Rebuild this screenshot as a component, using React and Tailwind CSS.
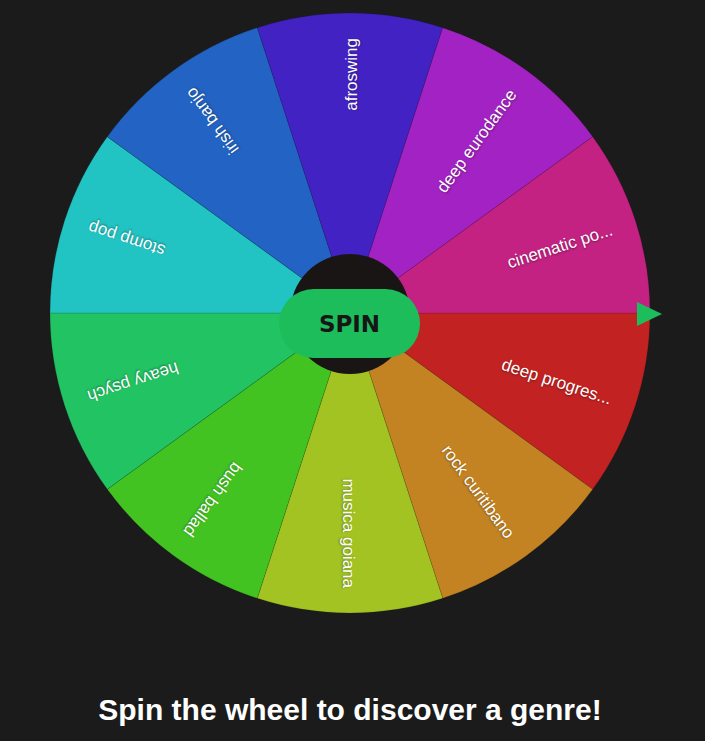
import { useState } from 'react';

const genres = [
  'deep progres...',
  'rock curitibano',
  'musica goiana',
  'bush ballad',
  'heavy psych',
  'stomp pop',
  'irish banjo',
  'afroswing',
  'deep eurodance',
  'cinematic po...',
];

const R = 300;
const C = 300;

// point on the rim at a given angle (degrees, clockwise from east)
function rim(deg) {
  const a = (deg * Math.PI) / 180;
  return [C + R * Math.cos(a), C + R * Math.sin(a)];
}

function Wheel({ rotation }) {
  const step = 360 / genres.length;
  return (
    <svg width="600" height="600" viewBox="0 0 600 600" style={{ transform: `rotate(${rotation}deg)` }}>
      {genres.map((g, i) => {
        const start = i * step;
        const [x1, y1] = rim(start);
        const [x2, y2] = rim(start + step);
        return (
          <path
            key={g}
            d={`M${C} ${C} L${x1} ${y1} A${R} ${R} 0 0 1 ${x2} ${y2} Z`}
            fill={`hsl(${i * step}, 70%, 45%)`}
            stroke="rgba(0,0,0,0.12)"
            strokeWidth="1"
          />
        );
      })}
      {genres.map((g, i) => (
        <text
          key={g + '-label'}
          transform={`translate(${C} ${C}) rotate(${i * step + step / 2})`}
          x="275"
          y="7"
          textAnchor="end"
          fill="#fff"
          fontSize="17"
          fontFamily="'Liberation Sans', Arial, sans-serif"
          className="[text-shadow:0_1px_2px_rgba(0,0,0,0.4)]"
        >
          {g}
        </text>
      ))}
      <circle cx={C} cy={C + 1} r="60" fill="#1a1515" />
    </svg>
  );
}

export default function App() {
  const [rotation, setRotation] = useState(0);

  const spin = () => {
    setRotation((r) => r + 1440 + Math.floor(Math.random() * 360));
  };

  return (
    <div className="min-h-screen bg-[#1b1b1b] font-['Liberation_Sans',Arial,sans-serif]">
      <div className="w-[700px] flex flex-col items-center pt-[13px]">
        <div className="relative w-[600px] h-[600px]">
          <Wheel rotation={rotation} />

          <button
            onClick={spin}
            className="absolute left-[229px] top-[276px] w-[141px] h-[69px] rounded-full bg-[#1ebd5b] text-[#161616] text-[23px] font-bold font-['DejaVu_Sans',Verdana,sans-serif] flex items-center justify-center pt-px"
          >
            SPIN
          </button>

          {/* pointer */}
          <svg className="absolute left-[587px] top-[289px]" width="25" height="24" viewBox="0 0 25 24">
            <polygon points="0,0 25,12 0,24" fill="#1ebd5b" />
          </svg>
        </div>

        <h1 className="mt-[79px] text-3xl font-bold text-white">
          Spin the wheel to discover a genre!
        </h1>
      </div>
    </div>
  );
}
